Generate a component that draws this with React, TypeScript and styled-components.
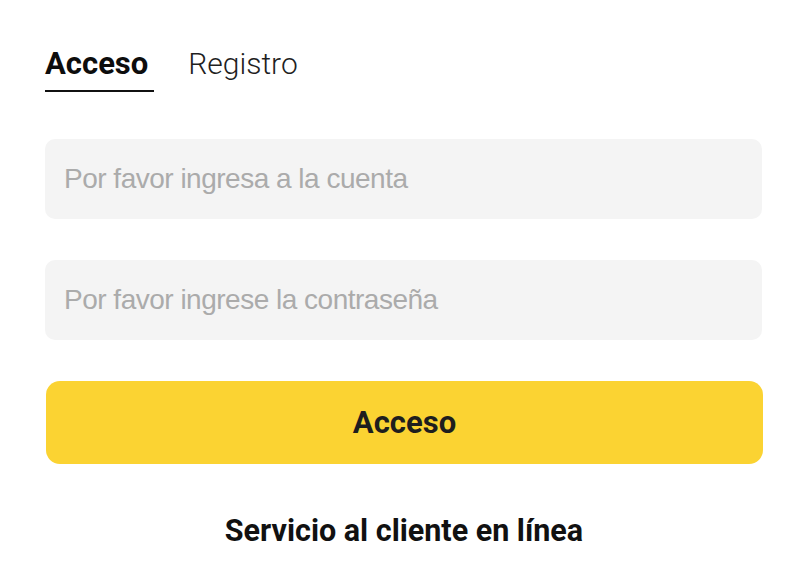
import * as React from "react";
import styled, { createGlobalStyle } from "styled-components";

const GlobalStyle = createGlobalStyle`
  html, body {
    margin: 0;
    padding: 0;
    background: #ffffff;
  }
  body {
    font-family: Roboto, "Liberation Sans", sans-serif;
  }
`;

const Page = styled.div`
  width: 800px;
  padding: 46px 37px 0 45px;
  box-sizing: border-box;
`;

const Tabs = styled.div`
  display: flex;
  align-items: flex-end;
  gap: 34px;
  margin-bottom: 47px;
`;

const Tab = styled.div<{ $active?: boolean }>`
  font-size: ${(p) => (p.$active ? "31px" : "30px")};
  line-height: 36px;
  font-weight: ${(p) => (p.$active ? 700 : 300)};
  color: ${(p) => (p.$active ? "#0d0d0d" : "#1f1f1f")};
  padding-bottom: 8px;
  border-bottom: 2px solid ${(p) => (p.$active ? "#111111" : "transparent")};
  padding-right: ${(p) => (p.$active ? "6px" : "0")};
`;

const Form = styled.div`
  display: flex;
  flex-direction: column;
  gap: 41px;
`;

const Field = styled.input`
  height: 80px;
  border: none;
  outline: none;
  border-radius: 10px;
  background: #f4f4f4;
  padding: 0 19px;
  font-family: "Liberation Sans", Arial, sans-serif;
  font-size: 28px;
  letter-spacing: -0.5px;
  color: #333;
  box-sizing: border-box;
  width: 717px;

  &::placeholder {
    color: #ababab;
  }
`;

const SubmitButton = styled.button`
  margin-left: 1px;
  width: 717px;
  height: 83px;
  border: none;
  border-radius: 14px;
  background: #fbd332;
  font-family: Roboto, "Liberation Sans", sans-serif;
  font-size: 31px;
  font-weight: 700;
  color: #1e1e1e;
  cursor: pointer;
`;

const SupportLink = styled.div`
  margin-top: 49px;
  text-align: center;
  font-size: 30.5px;
  line-height: 36px;
  font-weight: 700;
  color: #111111;
`;

export default function App() {
  return (
    <>
      <GlobalStyle />
      <Page>
        <Tabs>
          <Tab $active>Acceso</Tab>
          <Tab>Registro</Tab>
        </Tabs>
        <Form>
          <Field placeholder="Por favor ingresa a la cuenta" />
          <Field type="password" placeholder="Por favor ingrese la contraseña" />
          <SubmitButton>Acceso</SubmitButton>
        </Form>
        <SupportLink>Servicio al cliente en línea</SupportLink>
      </Page>
    </>
  );
}
